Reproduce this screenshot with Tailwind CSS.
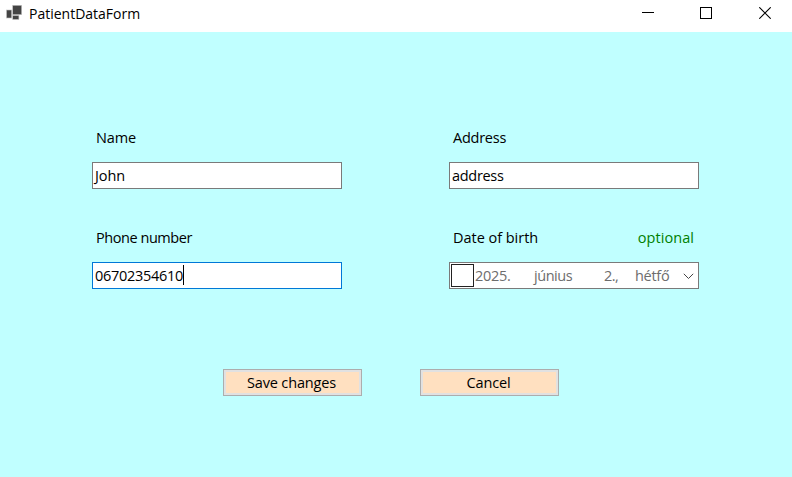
<!DOCTYPE html>
<html lang="en">
<head>
<meta charset="utf-8">
<title>PatientDataForm</title>
<script src="https://cdn.jsdelivr.net/npm/@tailwindcss/browser@4"></script>
</head>
<body class="w-[792px] h-[477px] overflow-hidden bg-[#c0ffff] font-['Open_Sans','Noto_Sans',sans-serif] text-[14.5px] leading-5 tracking-[-0.3px] text-black flex flex-col whitespace-nowrap">
<header class="h-8 shrink-0 bg-white flex justify-between">
  <div class="flex pl-1.5 pt-1">
    <svg class="w-[17px] h-4 mt-px mr-1.5" viewBox="0 0 17 16" fill="#444" stroke="#c4c4c4" stroke-width=".6"><rect x="6.7" y=".3" width="9" height="9.4"/><rect x=".5" y="5" width="5.2" height="8"/><rect x="6.7" y="10.5" width="6.2" height="4"/></svg>
    <h1 class="text-[14px] tracking-[0px]">PatientDataForm</h1>
  </div>
  <div class="flex pr-[21px] pt-[7px] gap-[46px]">
    <svg class="w-3 h-3" viewBox="0 0 12 12"><path d="M0 5.5H12" stroke="#000" shape-rendering="crispEdges"/></svg>
    <svg class="w-3 h-3" viewBox="0 0 12 12"><rect x=".5" y=".5" width="11" height="11" fill="none" stroke="#000"/></svg>
    <svg class="w-3 h-3 ml-px" viewBox="0 0 12 12"><path d="M.3.3 11.7 11.7M11.7.3.3 11.7" stroke="#000" stroke-width="1.1"/></svg>
  </div>
</header>
<main class="pt-24 pl-[92px]">
  <div class="grid grid-cols-[250px_250px] gap-x-[107px] gap-y-[39px]">
    <div>
      <div class="h-[34px] pl-1 tracking-[-0.1px]"><span>Name</span></div>
      <div class="h-[27px] bg-white border border-[#7a7a7a] pl-0.5 pt-[3px] tracking-[-0.1px]"><span>John</span></div>
    </div>
    <div>
      <div class="h-[34px] pl-1 tracking-[-0.25px]"><span>Address</span></div>
      <div class="h-[27px] bg-white border border-[#7a7a7a] pl-0.5 pt-[3px]"><span>address</span></div>
    </div>
    <div>
      <div class="h-[34px] pl-1 tracking-[-0.45px]"><span>Phone number</span></div>
      <div class="h-[27px] bg-white border border-[#0078d7] pl-0.5 pt-[3px] flex"><span>06702354610</span><i class="w-px h-5 bg-black -mt-px"></i></div>
    </div>
    <div>
      <div class="h-[34px] pl-1 pr-[5px] flex justify-between"><span class="tracking-[-0.03px]">Date of birth</span><span class="text-[#008000] tracking-[0.05px]">optional</span></div>
      <div class="h-[27px] bg-white border border-[#7a7a7a] pl-px flex text-[#6d6d6d]">
        <i class="w-[23px] h-[23px] mt-px border border-[#222] bg-white"></i>
        <div class="pt-[3px] pl-px flex">
          <span class="w-[59px]">2025.</span><span class="w-[70px] tracking-[-0.45px]">június</span><span class="w-[31px] tracking-[-0.5px]">2.,</span><span class="w-[48px]">hétfő</span>
        </div>
        <svg class="w-[11px] h-[7px] mt-[10px]" viewBox="0 0 11 7" fill="none" stroke="#444"><path d="M.8.8 5.5 5.5 10.2.8"/></svg>
      </div>
    </div>
  </div>
  <div class="flex gap-[58px] pl-[131px] pt-20">
    <button class="w-[139px] h-[27px] border border-[#adadad] bg-[#e1e1e1] p-0.5"><span class="flex h-full items-center justify-center bg-[#ffe0c0] tracking-[-0.15px] pr-0.5"><span>Save changes</span></span></button>
    <button class="w-[139px] h-[27px] border border-[#adadad] bg-[#e1e1e1] p-0.5"><span class="flex h-full items-center justify-center bg-[#ffe0c0] tracking-[-0.15px] pr-0.5"><span>Cancel</span></span></button>
  </div>
</main>
</body>
</html>
